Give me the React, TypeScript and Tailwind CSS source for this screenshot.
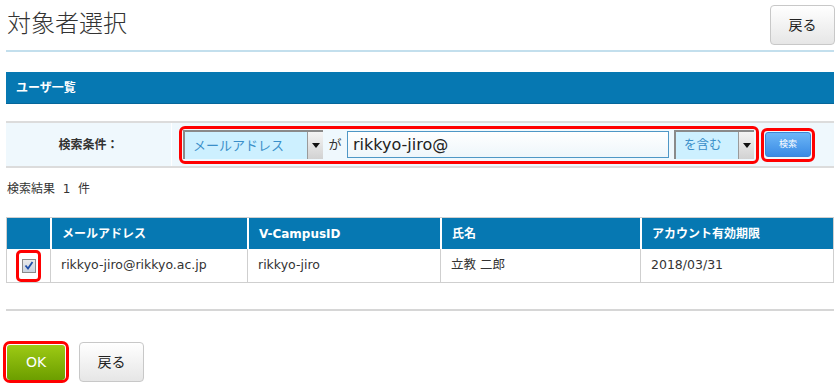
import React from "react";

const font = { fontFamily: '"DejaVu Sans", "Noto Sans CJK JP", sans-serif' };

function Arrow() {
  return (
    <div className="flex h-full w-[16px] items-center justify-center border-l border-[#9a9a9a] bg-gradient-to-b from-[#f4f4f4] to-[#d2d2d2]">
      <svg width="8" height="5" viewBox="0 0 8 5">
        <path d="M0 0 L8 0 L4 5 Z" fill="#111" />
      </svg>
    </div>
  );
}

function GrayButton({ label, className }: { label: string; className: string }) {
  return (
    <button
      className={`rounded-[4px] border border-[#c8c8c8] bg-gradient-to-b from-[#ffffff] to-[#e6e6e6] text-[14px] text-[#222] ${className}`}
    >
      {label}
    </button>
  );
}

export default function App() {
  const cols = [
    { label: "", w: "w-[43px]" },
    { label: "メールアドレス", w: "w-[197px]" },
    { label: "V-CampusID", w: "w-[193px]" },
    { label: "氏名", w: "w-[200px]" },
    { label: "アカウント有効期限", w: "flex-1" },
  ];

  return (
    <div className="h-[389px] w-[840px] overflow-hidden bg-white px-[6px] text-[#333]" style={font}>
      {/* page title */}
      <div className="flex h-[52px] items-start justify-between border-b-2 border-[#c3dfed] pt-[5px]">
        <h1 className="pl-[1px] pt-[4px] text-[24px] font-light leading-[30px] text-[#333]">対象者選択</h1>
        <GrayButton label="戻る" className="mr-[-1px] h-[40px] w-[65px]" />
      </div>

      {/* section bar */}
      <div className="mt-[20px] flex h-[32px] items-center border-b border-[#05669a] bg-[#0678b2] pl-[10px] text-[12px] font-bold text-white">
        ユーザ一覧
      </div>

      {/* search */}
      <div className="mt-[17px] flex h-[47px] border-y-2 border-[#dcdcdc] bg-[#eff8fd]">
        <div className="flex w-[166px] items-center justify-center border-r border-white text-[12px] font-bold text-[#333]">
          検索条件：
        </div>
        <div className="flex items-center pl-[7px]">
          <div className="flex h-[38px] items-center rounded-[6px] border-[3px] border-[#ff0000] px-[1px]">
            <div className="flex h-[29px] w-[140px] items-center border-l-2 border-t-2 border-[#8a8a8a] bg-[#cdf0ff]">
              <span className="flex-1 pl-[8px] text-[13px] text-[#3a8fc9]">メールアドレス</span>
              <Arrow />
            </div>
            <span className="w-[24px] text-center text-[13px] text-[#333]">が</span>
            <div className="flex h-[27px] w-[322px] items-center border border-[#4f97c6] bg-gradient-to-b from-white to-[#eef6fb] pl-[5px] text-[16px] text-[#222]">
              rikkyo-jiro@
            </div>
            <div className="ml-[5px] mr-[1px] flex h-[29px] w-[80px] items-center border-l-2 border-t-2 border-[#8a8a8a] bg-[#cdf0ff]">
              <span className="flex-1 pl-[8px] text-[12.5px] text-[#3a8fc9]">を含む</span>
              <Arrow />
            </div>
          </div>
          <div className="ml-[2px] flex h-[34px] w-[54px] items-center justify-center rounded-[6px] border-[3px] border-[#ff0000]">
            <button className="h-[25px] w-[46px] rounded-[3px] border border-[#3d86d6] bg-gradient-to-b from-[#6cb6f7] to-[#3a8be4] text-[9px] text-white">
              検索
            </button>
          </div>
        </div>
      </div>

      {/* result count */}
      <div className="mt-[13px] pl-[1px] text-[12px] leading-[16px] text-[#333]">検索結果 &nbsp;1&nbsp; 件</div>

      {/* result table */}
      <div className="mt-[20px] border border-[#cfcfcf]">
        <div className="flex h-[31px] bg-[#0678b2] text-[12px] font-bold text-white">
          {cols.map((c, i) => (
            <div key={i} className={`${c.w} flex items-center pl-[10px] ${i > 0 ? "border-l-2 border-white" : ""}`}>
              {c.label}
            </div>
          ))}
        </div>
        <div className="flex h-[33px] text-[12.5px] text-[#333]">
          <div className="flex w-[43px] items-center justify-center">
            <div className="flex h-[32px] w-[25px] items-center justify-center rounded-[5px] border-[3px] border-[#ff0000]">
              <div className="flex h-[14px] w-[14px] items-center justify-center border border-[#8b8b8b] bg-gradient-to-b from-[#e9e9e9] to-[#c9d3e0]">
                <svg width="10" height="9" viewBox="0 0 10 9">
                  <path d="M1.5 4.5 L4 7.5 L8.5 1" fill="none" stroke="#1f4ea8" strokeWidth="1.8" />
                </svg>
              </div>
            </div>
          </div>
          <div className="flex w-[197px] items-center border-l border-[#cfcfcf] pl-[10px]">rikkyo-jiro@rikkyo.ac.jp</div>
          <div className="flex w-[193px] items-center border-l border-[#cfcfcf] pl-[10px]">rikkyo-jiro</div>
          <div className="flex w-[200px] items-center border-l border-[#cfcfcf] pl-[10px]">立教 二郎</div>
          <div className="flex flex-1 items-center border-l border-[#cfcfcf] pl-[10px]">2018/03/31</div>
        </div>
      </div>

      {/* bottom */}
      <div className="mt-[26px] h-0 border-t-2 border-[#d6d6d6]" />
      <div className="mt-[30px] flex items-center">
        <div className="ml-[-3px] flex h-[42px] w-[66px] items-center justify-center rounded-[7px] border-[3px] border-[#ff0000]">
          <button className="h-[35px] w-[58px] rounded-[3px] bg-gradient-to-b from-[#9dca14] to-[#6c9e00] text-[14px] text-white">
            OK
          </button>
        </div>
        <GrayButton label="戻る" className="ml-[10px] h-[40px] w-[65px]" />
      </div>
    </div>
  );
}
